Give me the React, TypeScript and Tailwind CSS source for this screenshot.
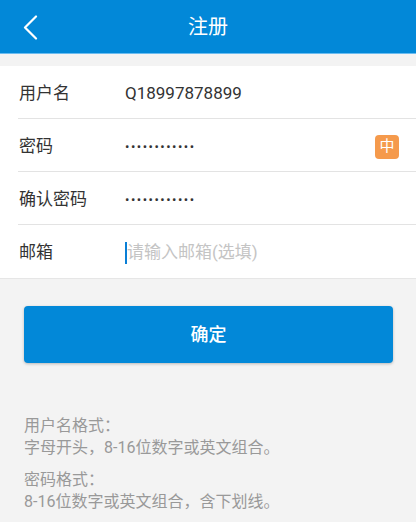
const font = { fontFamily: '"Roboto", "Noto Sans CJK SC", sans-serif' };

function Row({ label, children, last }: { label: string; children: React.ReactNode; last?: boolean }) {
  return (
    <div className="pl-[18px]">
      <div className={`flex h-[53px] items-center pt-[3px] pr-[17px] ${last ? '' : 'border-b border-[#e3e3e3]'}`}>
        <span className="w-[107px] pl-px text-[17px] text-[#333]">{label}</span>
        <div className="flex flex-1 items-center">{children}</div>
      </div>
    </div>
  );
}

function Dots() {
  return <span className="text-[13px] tracking-[1.5px] text-[#333]">••••••••••••</span>;
}

// full-width punctuation, kept one em wide
function P({ c }: { c: string }) {
  return <span className="inline-block w-[1em]">{c}</span>;
}

export default function App() {
  return (
    <div className="h-[522px] w-[416px] overflow-hidden bg-[#f3f3f3]" style={font}>
      {/* Header */}
      <div className="relative flex h-[54px] items-center justify-center border-b border-[#6bbcf0] bg-[#0288d8]">
        <svg className="absolute left-[22px] top-[15px]" width="16" height="25" viewBox="0 0 16 25" fill="none">
          <polyline points="14,1.5 3,12.5 14,23.5" stroke="white" strokeWidth="2.2" strokeLinecap="round" strokeLinejoin="round" />
        </svg>
        <span className="text-[20px] text-white">注册</span>
      </div>

      {/* Form */}
      <div className="mt-[12px] border-b border-[#e6e6e6] bg-white">
        <Row label="用户名">
          <span className="text-[17px] text-[#333]">Q18997878899</span>
        </Row>
        <Row label="密码">
          <Dots />
          <span className="ml-auto flex h-[24px] w-[24px] items-center justify-center rounded-[4px] bg-[#f59a4c] text-[15px] text-white">中</span>
        </Row>
        <Row label="确认密码">
          <Dots />
        </Row>
        <Row label="邮箱" last>
          <span className="h-[22px] w-[2px] bg-[#0a7fd6]" />
          <span className="text-[17px] text-[#c4c4c4]">请输入邮箱(选填)</span>
        </Row>
      </div>

      {/* Button */}
      <div className="px-[24px] pr-[23px] pt-[27px]">
        <button className="flex h-[57px] w-full items-center justify-center rounded-[4px] bg-[#0288d8] text-[18px] font-medium text-white shadow-[0_1px_3px_rgba(0,0,0,0.25)]">
          确定
        </button>
      </div>

      {/* Hints */}
      <div className="px-[24px] pt-[52px] text-[16px] leading-[22px] text-[#999]">
        <p>用户名格式<P c="：" /></p>
        <p>字母开头<P c="，" />8-16位数字或英文组合<P c="。" /></p>
        <p className="mt-[10px]">密码格式<P c="：" /></p>
        <p>8-16位数字或英文组合<P c="，" />含下划线<P c="。" /></p>
      </div>
    </div>
  );
}
